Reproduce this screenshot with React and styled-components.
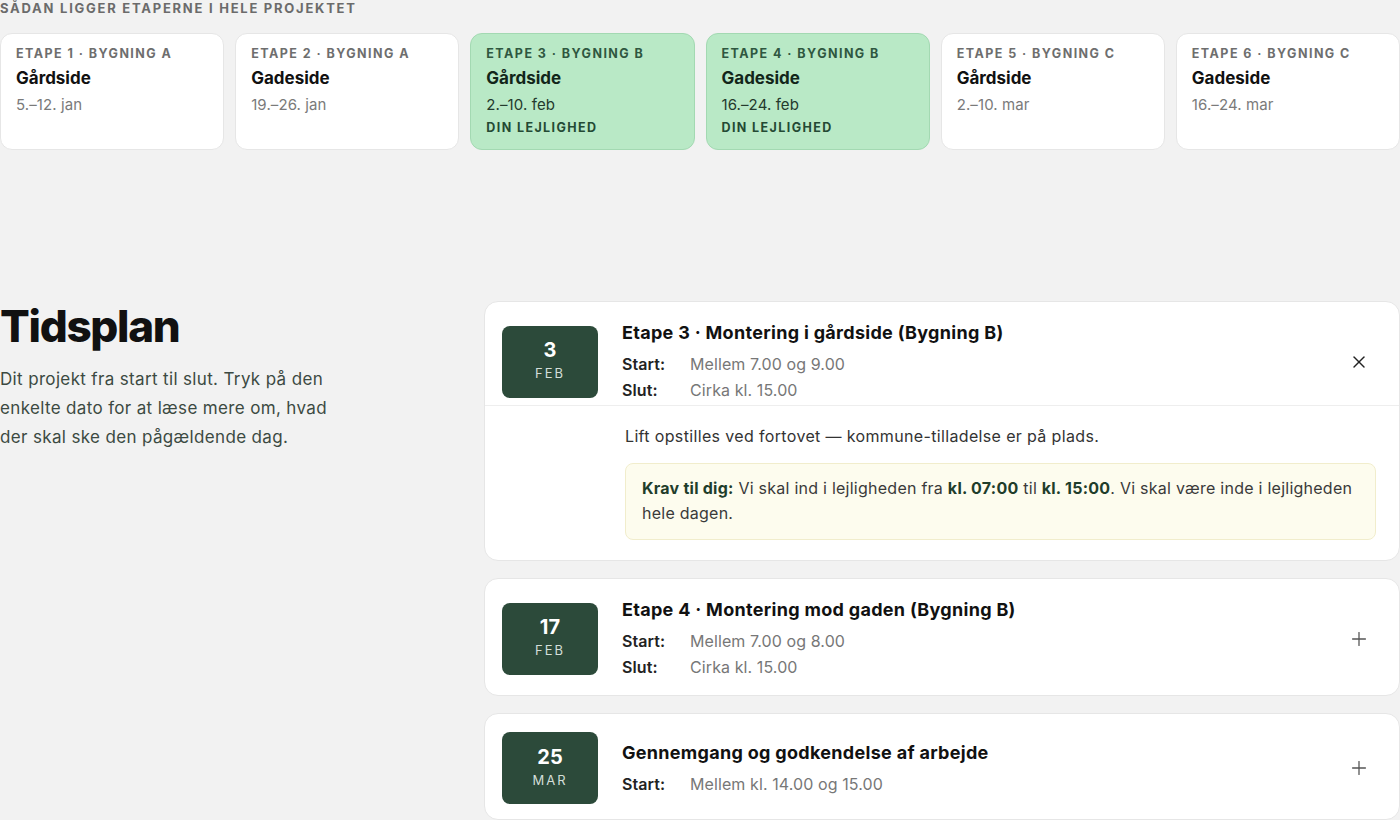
import React from "react";
import styled, { createGlobalStyle } from "styled-components";
import { X, Plus } from "lucide-react";

const Global = createGlobalStyle`
  * { box-sizing: border-box; }
  html, body { margin: 0; padding: 0; background: #f2f2f2; }
  body { font-family: Inter, "Noto Sans", "Liberation Sans", sans-serif; color: #111; -webkit-font-smoothing: antialiased; }
`;

const Page = styled.div`
  width: 1400px;
  height: 820px;
  overflow: hidden;
`;

const Overline = styled.div`
  font-size: 13px;
  line-height: 16px;
  font-weight: 700;
  letter-spacing: 1.75px;
  color: #6b6b6b;
  text-transform: uppercase;
  margin-bottom: 17px;
`;

const StageGrid = styled.div`
  display: grid;
  grid-template-columns: repeat(6, 1fr);
  gap: 11px;
`;

const StageCard = styled.div`
  background: ${(p) => (p.$mine ? "#b9e9c6" : "#ffffff")};
  border: 1px solid ${(p) => (p.$mine ? "#a3d9b2" : "#e6e6e6")};
  border-radius: 12px;
  padding: 12px 15px 13px;
  min-height: 116px;
  display: flex;
  flex-direction: column;
`;

const StageLabel = styled.div`
  font-size: 12.5px;
  line-height: 16px;
  font-weight: 700;
  letter-spacing: 1.45px;
  color: ${(p) => (p.$mine ? "#2f5740" : "#6e6e6e")};
`;

const StageTitle = styled.div`
  margin-top: 4px;
  font-size: 17px;
  line-height: 24px;
  font-weight: 700;
  color: ${(p) => (p.$mine ? "#12261a" : "#111")};
`;

const StageDate = styled.div`
  margin-top: 4px;
  font-size: 15px;
  line-height: 22px;
  letter-spacing: 0.1px;
  color: ${(p) => (p.$mine ? "#243a2d" : "#7a7a7a")};
`;

const MineTag = styled.div`
  margin-top: 4px;
  font-size: 12.5px;
  line-height: 16px;
  font-weight: 700;
  letter-spacing: 1.4px;
  color: #244a34;
`;

const Section = styled.section`
  margin-top: 151px;
  display: grid;
  grid-template-columns: 484px 1fr;
  align-items: start;
`;

const Intro = styled.div`
  width: 340px;
`;

const Heading = styled.h1`
  margin: 0;
  font-size: 44px;
  line-height: 50px;
  font-weight: 800;
  letter-spacing: -1.3px;
  color: #111;
`;

const IntroText = styled.p`
  margin: 14px 0 0;
  font-size: 17px;
  line-height: 29px;
  letter-spacing: 0.35px;
  color: #3c4a42;
`;

const List = styled.div`
  display: flex;
  flex-direction: column;
  gap: 17px;
`;

const Card = styled.div`
  background: #fff;
  border: 1px solid #e6e6e6;
  border-radius: 14px;
  overflow: hidden;
`;

const CardHeader = styled.div`
  display: flex;
  align-items: center;
  gap: 24px;
  padding: 18px 26px ${(p) => (p.$open ? "2px" : "15px")} 17px;
  border-bottom: ${(p) => (p.$open ? "1px solid #eeeeee" : "none")};
`;

const DateBadge = styled.div`
  flex: 0 0 96px;
  height: 72px;
  border-radius: 8px;
  background: #2c4a3a;
  display: flex;
  flex-direction: column;
  align-items: center;
  justify-content: center;
  padding-bottom: 3px;
  color: #fff;
`;

const BadgeDay = styled.div`
  font-size: 20px;
  line-height: 24px;
  font-weight: 700;
`;

const BadgeMonth = styled.div`
  margin-top: 2px;
  font-size: 13px;
  line-height: 18px;
  letter-spacing: 2px;
  color: #d3ded8;
`;

const Info = styled.div`
  flex: 1;
  display: flex;
  flex-direction: column;
`;

const EventTitle = styled.div`
  font-size: 18px;
  line-height: 26px;
  font-weight: 700;
  letter-spacing: 0.3px;
  color: #111;
  margin-bottom: 5px;
`;

const TimeRow = styled.div`
  display: flex;
  font-size: 16px;
  line-height: 26px;
  letter-spacing: 0.1px;
`;

const TimeLabel = styled.span`
  width: 68px;
  font-weight: 600;
  color: #222;
`;

const TimeValue = styled.span`
  color: #777;
`;

const IconButton = styled.button`
  border: none;
  background: transparent;
  padding: 0;
  width: 28px;
  height: 28px;
  display: flex;
  align-items: center;
  justify-content: center;
  color: ${(p) => (p.$open ? "#222" : "#555")};
  cursor: pointer;
`;

const CardBody = styled.div`
  padding: 17px 23px 20px 140px;
`;

const BodyText = styled.p`
  margin: 0;
  font-size: 16px;
  line-height: 26px;
  letter-spacing: 0.35px;
  color: #333;
`;

const Note = styled.div`
  margin-top: 14px;
  background: #fdfcee;
  border: 1px solid #f1edcc;
  border-radius: 8px;
  padding: 12px 16px 13px;
  font-size: 16px;
  line-height: 25px;
  letter-spacing: 0.25px;
  color: #3a3a3a;
  b { color: #1f3d2b; font-weight: 700; }
`;

const stages = [
  { label: "ETAPE 1 · BYGNING A", title: "Gårdside", date: "5.–12. jan" },
  { label: "ETAPE 2 · BYGNING A", title: "Gadeside", date: "19.–26. jan" },
  { label: "ETAPE 3 · BYGNING B", title: "Gårdside", date: "2.–10. feb", mine: true },
  { label: "ETAPE 4 · BYGNING B", title: "Gadeside", date: "16.–24. feb", mine: true },
  { label: "ETAPE 5 · BYGNING C", title: "Gårdside", date: "2.–10. mar" },
  { label: "ETAPE 6 · BYGNING C", title: "Gadeside", date: "16.–24. mar" },
];

const events = [
  {
    day: "3",
    month: "FEB",
    title: "Etape 3 · Montering i gårdside (Bygning B)",
    rows: [["Start:", "Mellem 7.00 og 9.00"], ["Slut:", "Cirka kl. 15.00"]],
    open: true,
  },
  {
    day: "17",
    month: "FEB",
    title: "Etape 4 · Montering mod gaden (Bygning B)",
    rows: [["Start:", "Mellem 7.00 og 8.00"], ["Slut:", "Cirka kl. 15.00"]],
  },
  {
    day: "25",
    month: "MAR",
    title: "Gennemgang og godkendelse af arbejde",
    rows: [["Start:", "Mellem kl. 14.00 og 15.00"]],
  },
];

export default function App() {
  return (
    <Page>
      <Global />
      <Overline>Sådan ligger etaperne i hele projektet</Overline>
      <StageGrid>
        {stages.map((s) => (
          <StageCard key={s.label} $mine={s.mine}>
            <StageLabel $mine={s.mine}>{s.label}</StageLabel>
            <StageTitle $mine={s.mine}>{s.title}</StageTitle>
            <StageDate $mine={s.mine}>{s.date}</StageDate>
            {s.mine && <MineTag>DIN LEJLIGHED</MineTag>}
          </StageCard>
        ))}
      </StageGrid>

      <Section>
        <Intro>
          <Heading>Tidsplan</Heading>
          <IntroText>
            Dit projekt fra start til slut. Tryk på den enkelte dato for at læse mere om, hvad der skal ske den pågældende dag.
          </IntroText>
        </Intro>
        <List>
          {events.map((e) => (
            <Card key={e.title}>
              <CardHeader $open={e.open}>
                <DateBadge>
                  <BadgeDay>{e.day}</BadgeDay>
                  <BadgeMonth>{e.month}</BadgeMonth>
                </DateBadge>
                <Info>
                  <EventTitle>{e.title}</EventTitle>
                  {e.rows.map(([l, v]) => (
                    <TimeRow key={l}>
                      <TimeLabel>{l}</TimeLabel>
                      <TimeValue>{v}</TimeValue>
                    </TimeRow>
                  ))}
                </Info>
                <IconButton $open={e.open} aria-label={e.open ? "Luk" : "Åbn"}>
                  {e.open ? <X size={20} strokeWidth={1.7} /> : <Plus size={22} strokeWidth={1.4} />}
                </IconButton>
              </CardHeader>
              {e.open && (
                <CardBody>
                  <BodyText>Lift opstilles ved fortovet — kommune-tilladelse er på plads.</BodyText>
                  <Note>
                    <b>Krav til dig:</b> Vi skal ind i lejligheden fra <b>kl. 07:00</b> til <b>kl. 15:00</b>. Vi skal være inde i lejligheden hele dagen.
                  </Note>
                </CardBody>
              )}
            </Card>
          ))}
        </List>
      </Section>
    </Page>
  );
}
